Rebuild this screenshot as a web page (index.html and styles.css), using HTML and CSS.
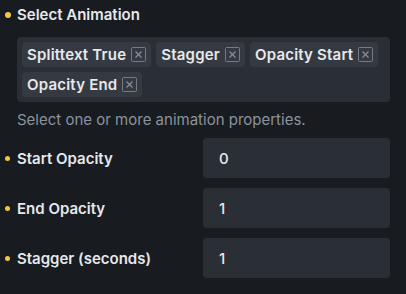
FILE: index.html
```html
<!DOCTYPE html>
<html>
<head>
<meta charset="utf-8">
<link rel="stylesheet" href="styles.css">
</head>
<body>
<div class="panel">
  <div class="field">
    <div class="label big"><span class="dot"></span>Select Animation</div>
    <div class="tags">
      <span class="tag">Splittext True<svg class="x" viewBox="0 0 15 15"><rect x="0.5" y="0.5" width="14" height="14" rx="1"/><path d="M4.5 4.5L10.5 10.5M10.5 4.5L4.5 10.5"/></svg></span>
      <span class="tag">Stagger<svg class="x" viewBox="0 0 15 15"><rect x="0.5" y="0.5" width="14" height="14" rx="1"/><path d="M4.5 4.5L10.5 10.5M10.5 4.5L4.5 10.5"/></svg></span>
      <span class="tag">Opacity Start<svg class="x" viewBox="0 0 15 15"><rect x="0.5" y="0.5" width="14" height="14" rx="1"/><path d="M4.5 4.5L10.5 10.5M10.5 4.5L4.5 10.5"/></svg></span>
      <span class="tag">Opacity End<svg class="x" viewBox="0 0 15 15"><rect x="0.5" y="0.5" width="14" height="14" rx="1"/><path d="M4.5 4.5L10.5 10.5M10.5 4.5L4.5 10.5"/></svg></span>
    </div>
    <div class="help">Select one or more animation properties.</div>
  </div>
  <div class="row">
    <div class="label"><span class="dot small"></span>Start Opacity</div>
    <div class="input">0</div>
  </div>
  <div class="row">
    <div class="label"><span class="dot small"></span>End Opacity</div>
    <div class="input">1</div>
  </div>
  <div class="row">
    <div class="label"><span class="dot small"></span>Stagger (seconds)</div>
    <div class="input">1</div>
  </div>
</div>
</body>
</html>
```

FILE: styles.css
```css
html, body {
  margin: 0;
  background: #181b1f;
}
body {
  font-family: Inter, "Noto Sans", sans-serif;
  color: #e6e8eb;
  font-size: 15px;
}
.panel {
  width: 390px;
  padding-top: 5px;
}
.label {
  position: relative;
  padding-left: 17px;
  font-weight: 600;
  line-height: 20px;
}
.dot {
  position: absolute;
  left: 5px;
  top: 8px;
  width: 5px;
  height: 5px;
  border-radius: 50%;
  background: #f2c744;
}
.big .dot {
  width: 6px;
  height: 6px;
  top: 7px;
}
.tags {
  margin: 12px 0 0 17px;
  background: #2a2e35;
  border-radius: 4px;
  padding: 5px;
  display: flex;
  flex-wrap: wrap;
  gap: 5px;
}
.tag {
  display: inline-flex;
  align-items: center;
  gap: 5px;
  height: 25px;
  padding: 0 5px 0 5px;
  background: #353a42;
  border-radius: 4px;
  font-weight: 600;
  letter-spacing: 0.2px;
}
.x {
  width: 15px;
  height: 15px;
  flex: none;
}
.x rect {
  fill: none;
  stroke: #757c86;
  stroke-width: 1;
}
.x path {
  stroke: #8b929c;
  stroke-width: 1.1;
  fill: none;
}
.help {
  margin: 10px 0 0 17px;
  color: #8a939e;
  line-height: 16px;
}
.row {
  display: flex;
  align-items: center;
  margin-top: 10px;
}
.row .label {
  width: 186px;
  padding-top: 2px;
}
.row .dot {
  top: 9px;
}
.input {
  flex: 1;
  height: 40px;
  background: #2a2f36;
  border-radius: 4px;
  padding-left: 16px;
  display: flex;
  align-items: center;
  font-weight: 500;
}
```
